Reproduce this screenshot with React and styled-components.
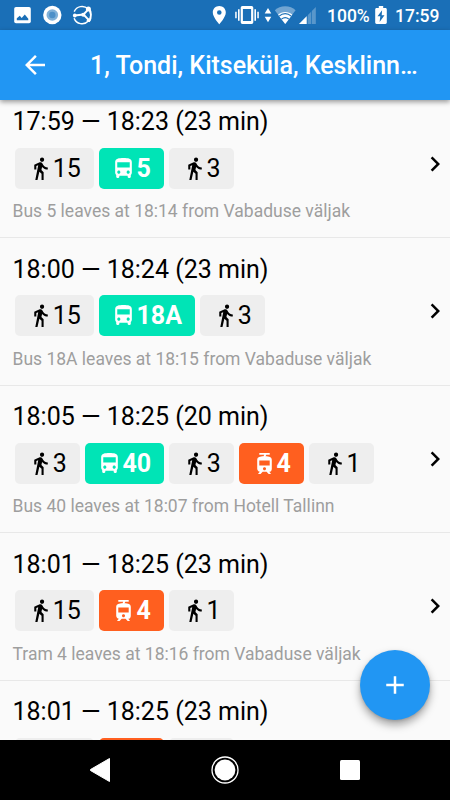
import React from 'react'
import styled, { createGlobalStyle } from 'styled-components'
import { MdAdd, MdArrowBack, MdChevronRight, MdDirectionsBus, MdDirectionsWalk, MdTram } from 'react-icons/md'

const trips = [
  {
    time: '17:59 — 18:23 (23 min)',
    legs: [['walk', '15'], ['bus', '5'], ['walk', '3']],
    note: 'Bus 5 leaves at 18:14 from Vabaduse väljak',
  },
  {
    time: '18:00 — 18:24 (23 min)',
    legs: [['walk', '15'], ['bus', '18A'], ['walk', '3']],
    note: 'Bus 18A leaves at 18:15 from Vabaduse väljak',
  },
  {
    time: '18:05 — 18:25 (20 min)',
    legs: [['walk', '3'], ['bus', '40'], ['walk', '3'], ['tram', '4'], ['walk', '1']],
    note: 'Bus 40 leaves at 18:07 from Hotell Tallinn',
  },
  {
    time: '18:01 — 18:25 (23 min)',
    legs: [['walk', '15'], ['tram', '4'], ['walk', '1']],
    note: 'Tram 4 leaves at 18:16 from Vabaduse väljak',
  },
  {
    time: '18:01 — 18:25 (23 min)',
    legs: [['walk', '15'], ['tram', '4'], ['walk', '1']],
    note: 'Tram 4 leaves at 18:16 from Vabaduse väljak',
  },
]

const legIcons = { walk: MdDirectionsWalk, bus: MdDirectionsBus, tram: MdTram }
const legColors = { walk: '#eeeeee', bus: '#00e4b6', tram: '#ff5f1f' }

const NotificationIcons = () => (
  <svg width='94' height='30' viewBox='0 0 94 30'>
    {/* picture */}
    <rect x='14.2' y='7' width='16.6' height='16.2' rx='1.8' fill='#fff' />
    <path d='M16.8 20.3v-2l3-2.5 1.9 2.1 3.1-3.4 3.5 4.2v1.6z' fill='#1a6fb7' />
    {/* ring */}
    <circle cx='52.3' cy='15' r='9.2' fill='#fff' />
    <circle cx='52.3' cy='15' r='5.8' fill='#80b1d8' />
    <circle cx='52.3' cy='15' r='3.2' fill='#4c90c8' />
    {/* globe */}
    <g fill='none' stroke='#fff'>
      <path d='M74.2 11.6A8.6 8.6 0 0 1 88 8.8' strokeWidth='1.5' />
      <path d='M74.1 18.2a8.6 8.6 0 0 0 14.3 2.9' strokeWidth='1.5' />
      <path d='M88.2 7.6a12 12 0 0 1 .6 14' strokeWidth='2.2' />
      <path d='M74.5 15.5l9-1 5.3-5.7M83.5 14.5l5.4 5.6' strokeWidth='1.9' />
    </g>
    <circle cx='74.8' cy='15.5' r='1.9' fill='#fff' />
    <circle cx='83.2' cy='14.7' r='2' fill='#fff' />
    <circle cx='88.4' cy='9' r='2.5' fill='#fff' />
    <circle cx='88.6' cy='20.2' r='1.8' fill='#fff' />
  </svg>
)

const SignalIcons = () => (
  <svg width='110' height='30' viewBox='210 0 110 30'>
    <g fill='#fff'>
      <path fillRule='evenodd' d='M219.3 6.1c-3.7 0-6.5 2.8-6.5 6.4 0 4.8 6.5 11.7 6.5 11.7s6.5-6.9 6.5-11.7c0-3.6-2.8-6.4-6.5-6.4zm0 4.1a2.3 2.3 0 1 1 0 4.6 2.3 2.3 0 0 1 0-4.6z' />
      <path fillRule='evenodd' d='M242.4 6h9.2a1.7 1.7 0 0 1 1.7 1.7v14.6a1.7 1.7 0 0 1-1.7 1.7h-9.2a1.7 1.7 0 0 1-1.7-1.7V7.7A1.7 1.7 0 0 1 242.4 6zm.5 3v12h8.2V9z' />
      <path d='M235.2 11.8h1.5v6.4h-1.5zM238 9.3h1.6v11.4H238zM254.4 9.3h1.6v11.4h-1.6zM257.3 11.8h1.5v6.4h-1.5z' />
      <path d='M268 8l3.3 5.4h-6.6zM268 22.2l3.3-5.4h-6.6z' />
      <path opacity='.38' d='M274.8 10.3C277.6 7.6 281 6.2 285.2 6.2s7.6 1.4 10.4 4.1L285.2 24z' />
      <path d='M278.1 14.7c1.9-1.8 4.3-2.7 7.1-2.7s5.2.9 7.1 2.7L285.2 24z' />
      <path opacity='.28' d='M315.8 7v17H299z' />
      <path d='M306.7 16.2V24H299z' />
    </g>
    <path d='M279.2 16.1c3.5-3.2 8.5-3.2 12 0M281.5 19.1c2.2-1.9 5.2-1.9 7.4 0' fill='none' stroke='#1a6fb7' strokeWidth='1.2' />
    <path d='M307.4 14.5V24M311.5 11V24' stroke='#1a6fb7' strokeWidth='.7' />
  </svg>
)

const BatteryIcon = () => (
  <svg width='12' height='20' viewBox='0 0 12 20'>
    <path d='M3.8 1h4.4v2h2.2c.8 0 1.4.6 1.4 1.4v13.2c0 .8-.6 1.4-1.4 1.4H1.6C.8 19 .2 18.4.2 17.6V4.4C.2 3.6.8 3 1.6 3h2.2z' fill='#fff' />
    <path d='M7.1 5.3l-4.6 6h2.8L4.6 17l4.9-6.8H6.7z' fill='#1a6fb7' />
  </svg>
)

const App = () => {
  return (
    <Screen>
      <GlobalStyle />
      <StatusBar>
        <NotificationIcons />
        <StatusRight>
          <SignalIcons />
          <Battery>100%</Battery>
          <BatteryIcon />
          <Clock>17:59</Clock>
        </StatusRight>
      </StatusBar>
      <AppBar>
        <MdArrowBack size={30} />
        <Title>1, Tondi, Kitseküla, Kesklinn…</Title>
      </AppBar>

      <TripList>
        {trips.map((trip, i) => (
          <Trip key={i}>
            <TripInfo>
              <TripTime>{trip.time}</TripTime>
              <Legs>
                {trip.legs.map(([kind, label], n) => {
                  const Icon = legIcons[kind]
                  return (
                    <Leg key={n} $kind={kind}>
                      <Icon size={25} />
                      <span>{label}</span>
                    </Leg>
                  )
                })}
              </Legs>
              <Note>{trip.note}</Note>
            </TripInfo>
            <MdChevronRight size={30} />
          </Trip>
        ))}
      </TripList>

      <AddButton aria-label='Add'>
        <MdAdd size={30} />
      </AddButton>

      <NavBar>
        <svg width='30' height='30' viewBox='0 0 30 30'>
          <path d='M24.5 3.5v23L5.5 15.5v-1z' fill='#fff' stroke='#fff' strokeLinejoin='round' />
        </svg>
        <svg width='30' height='30' viewBox='0 0 30 30'>
          <circle cx='15' cy='15' r='13' fill='none' stroke='#fff' strokeWidth='1.3' />
          <circle cx='15' cy='15' r='10.4' fill='#fff' />
        </svg>
        <svg width='30' height='30' viewBox='0 0 30 30'>
          <rect x='5' y='5' width='20' height='20' rx='1.5' fill='#fff' />
        </svg>
      </NavBar>
    </Screen>
  )
}

const GlobalStyle = createGlobalStyle`
  * {
    box-sizing: border-box;
  }
  body {
    margin: 0;
    font-family: Roboto, sans-serif;
  }
`

const Screen = styled.div`
  position: relative;
  display: flex;
  flex-direction: column;
  width: 450px;
  height: 800px;
  overflow: hidden;
  background: #fafafa;

  svg {
    display: block;
    flex-shrink: 0;
  }
`

const StatusBar = styled.div`
  display: flex;
  justify-content: space-between;
  flex-shrink: 0;
  height: 30px;
  padding-right: 10px;
  background: #1a6fb7;
`

const StatusRight = styled.div`
  display: flex;
  align-items: center;
  color: #fff;
  font-size: 17.5px;
  font-weight: 500;
  line-height: 30px;
`

const Battery = styled.span`
  width: 48px;
  margin-left: 7px;
  padding-top: 2px;
`

const Clock = styled.span`
  width: 45px;
  margin-left: 8px;
  padding-top: 2px;
`

const AppBar = styled.header`
  display: flex;
  align-items: center;
  flex-shrink: 0;
  gap: 40px;
  height: 70px;
  padding: 0 20px;
  color: #fff;
  background: #2196f3;
  box-shadow: 0 2px 5px rgba(0, 0, 0, 0.4);
  z-index: 1;
`

const Title = styled.h1`
  margin: 0;
  font-size: 25px;
  font-weight: 500;
  white-space: nowrap;
`

const TripList = styled.main`
  flex: 1;
  min-height: 0;
  /* first trip is scrolled slightly under the app bar */
  margin-top: -9.4px;
  overflow: hidden;
`

const Trip = styled.section`
  display: flex;
  align-items: center;
  justify-content: space-between;
  height: 147.5px;
  padding-left: 12.5px;
  border-bottom: 1.25px solid #e8e8e8;
  color: #000;
`

const TripInfo = styled.div`
  display: flex;
  flex-direction: column;
  height: 100%;
  padding-top: 16.5px;
`

const TripTime = styled.div`
  height: 29px;
  font-size: 25px;
  line-height: 29px;
  white-space: nowrap;
`

const Legs = styled.div`
  display: flex;
  gap: 5px;
  margin-top: 11.6px;
  padding-left: 2.5px;
`

const Leg = styled.div`
  display: flex;
  align-items: center;
  height: 41px;
  padding: 0 13px 0 12.7px;
  border-radius: 5px;
  font-size: 25px;
  font-weight: ${({ $kind }) => ($kind === 'walk' ? 400 : 700)};
  color: ${({ $kind }) => ($kind === 'walk' ? '#000' : '#fff')};
  background: ${({ $kind }) => legColors[$kind]};
`

const Note = styled.div`
  margin-top: 12.5px;
  font-size: 17.5px;
  line-height: 21px;
  white-space: nowrap;
  color: #9e9e9e;
`

const AddButton = styled.button`
  position: absolute;
  right: 20px;
  bottom: 80px;
  display: flex;
  align-items: center;
  justify-content: center;
  width: 70px;
  height: 70px;
  padding: 0;
  border: none;
  border-radius: 50%;
  color: #fff;
  background: #2196f3;
  box-shadow: 0 5px 9px rgba(0, 0, 0, 0.35), 0 1px 3px rgba(0, 0, 0, 0.12);
`

const NavBar = styled.nav`
  display: flex;
  align-items: center;
  justify-content: center;
  flex-shrink: 0;
  gap: 95px;
  height: 60px;
  background: #000;
  z-index: 1;
`

export default App
